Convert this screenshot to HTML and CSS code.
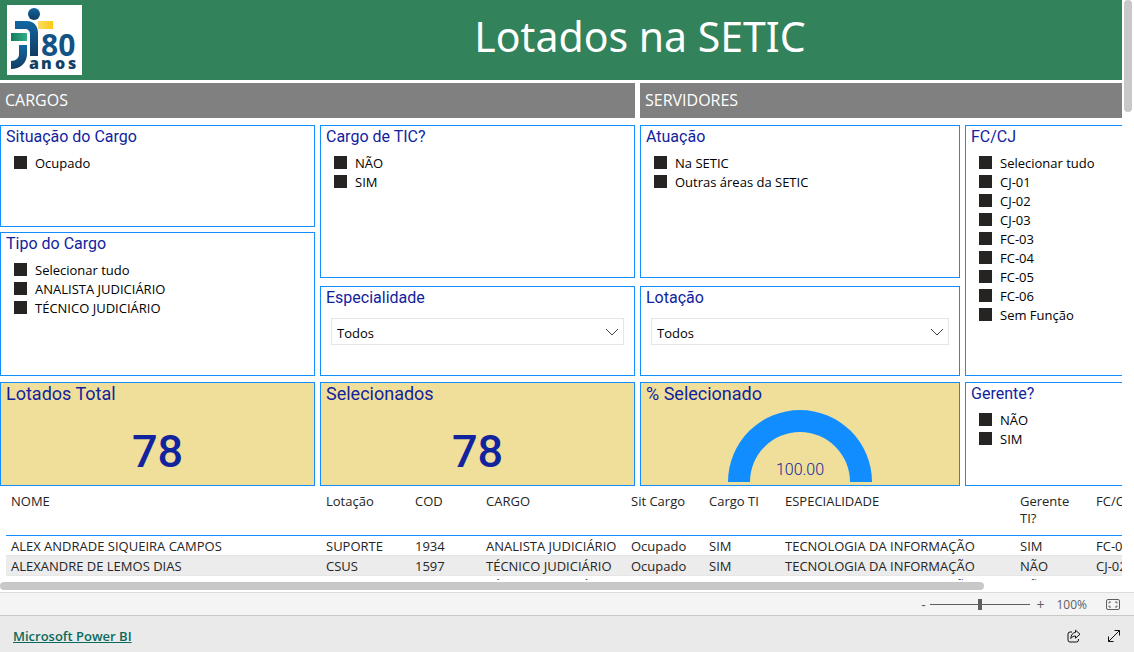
FILE: index.html
```html
<!DOCTYPE html>
<html lang="pt-BR">
<head>
<meta charset="utf-8">
<title>Lotados na SETIC</title>
<link rel="stylesheet" href="styles.css">
</head>
<body>
<div class="viewport">
  <div class="viewport-row">
    <main class="scroll-area">
      <div class="report">
        <header class="banner">
          <svg class="logo" viewBox="0 0 75 70" role="img" aria-label="80 anos">
            <defs>
              <linearGradient id="blue" x1="0" y1="0" x2="0" y2="1"><stop offset="0" stop-color="#1067a3"/><stop offset="1" stop-color="#123c61"/></linearGradient>
              <linearGradient id="green"><stop offset="0" stop-color="#117e5b"/><stop offset="1" stop-color="#35ad8a"/></linearGradient>
              <linearGradient id="yellow"><stop offset="0" stop-color="#fbdc68"/><stop offset="1" stop-color="#fdc910"/></linearGradient>
            </defs>
            <rect width="75" height="70" fill="#fff"/>
            <circle cx="27" cy="9" r="6" fill="url(#blue)"/>
            <path d="M8 16h12c7 0 11 5 11 12v23h-8V29c0-3-2-5-5-5H8z" fill="url(#blue)"/>
            <rect x="31" y="16" width="15" height="8" fill="url(#yellow)"/>
            <rect x="4" y="28" width="16" height="8" fill="url(#green)"/>
            <path d="M12 40h8v9c0 9-7 15-16 15v-8c5 0 8-3 8-7z" fill="url(#blue)"/>
            <text class="logo-number" x="34" y="51">80</text>
            <text class="logo-word" y="64"><tspan x="22">a</tspan><tspan x="34">n</tspan><tspan x="48">o</tspan><tspan x="61">s</tspan></text>
          </svg>
          <h1 class="title">Lotados na SETIC</h1>
        </header>

        <div class="sections">
          <h2 class="section">CARGOS</h2>
          <h2 class="section">SERVIDORES</h2>
        </div>

        <div class="filters">
          <div class="stack stack-first">
            <fieldset class="card short">
              <legend class="card-title">Situação do Cargo</legend>
              <label class="option"><input type="checkbox">Ocupado</label>
            </fieldset>
            <fieldset class="card grow">
              <legend class="card-title">Tipo do Cargo</legend>
              <label class="option"><input type="checkbox">Selecionar tudo</label>
              <label class="option"><input type="checkbox">ANALISTA JUDICIÁRIO</label>
              <label class="option"><input type="checkbox">TÉCNICO JUDICIÁRIO</label>
            </fieldset>
          </div>
          <div class="stack">
            <fieldset class="card grow">
              <legend class="card-title">Cargo de TIC?</legend>
              <label class="option"><input type="checkbox">NÃO</label>
              <label class="option"><input type="checkbox">SIM</label>
            </fieldset>
            <div class="card picker">
              <label class="card-title" for="especialidade">Especialidade</label>
              <div class="select-wrap">
                <select id="especialidade" class="select"><option>Todos</option></select>
                <svg class="chevron" viewBox="0 0 14 8"><path d="M1 1l6 6 6-6"/></svg>
              </div>
            </div>
          </div>
          <div class="stack">
            <fieldset class="card grow">
              <legend class="card-title">Atuação</legend>
              <label class="option"><input type="checkbox">Na SETIC</label>
              <label class="option"><input type="checkbox">Outras áreas da SETIC</label>
            </fieldset>
            <div class="card picker">
              <label class="card-title" for="lotacao">Lotação</label>
              <div class="select-wrap">
                <select id="lotacao" class="select"><option>Todos</option></select>
                <svg class="chevron" viewBox="0 0 14 8"><path d="M1 1l6 6 6-6"/></svg>
              </div>
            </div>
          </div>
          <div class="stack">
            <fieldset class="card grow">
              <legend class="card-title">FC/CJ</legend>
              <label class="option"><input type="checkbox">Selecionar tudo</label>
              <label class="option"><input type="checkbox">CJ-01</label>
              <label class="option"><input type="checkbox">CJ-02</label>
              <label class="option"><input type="checkbox">CJ-03</label>
              <label class="option"><input type="checkbox">FC-03</label>
              <label class="option"><input type="checkbox">FC-04</label>
              <label class="option"><input type="checkbox">FC-05</label>
              <label class="option"><input type="checkbox">FC-06</label>
              <label class="option"><input type="checkbox">Sem Função</label>
            </fieldset>
          </div>
        </div>

        <div class="kpis">
          <section class="card kpi">
            <h3 class="card-title">Lotados Total</h3>
            <p class="kpi-value">78</p>
          </section>
          <section class="card kpi">
            <h3 class="card-title">Selecionados</h3>
            <p class="kpi-value">78</p>
          </section>
          <section class="card kpi">
            <h3 class="card-title">% Selecionado</h3>
            <svg class="gauge" viewBox="0 0 144 72" role="img" aria-label="100,00">
              <path d="M0 72a72 72 0 0 1 144 0h-22a50 50 0 0 0-100 0z" fill="#118dff"/>
              <text class="gauge-value" x="72" y="65" text-anchor="middle">100.00</text>
            </svg>
          </section>
          <fieldset class="card">
            <legend class="card-title">Gerente?</legend>
            <label class="option"><input type="checkbox">NÃO</label>
            <label class="option"><input type="checkbox">SIM</label>
          </fieldset>
        </div>

        <table class="people">
          <colgroup>
            <col class="c-name"><col class="c-unit"><col class="c-code"><col class="c-role"><col class="c-status"><col class="c-ti"><col class="c-spec"><col class="c-manager"><col>
          </colgroup>
          <thead>
            <tr><th>NOME</th><th>Lotação</th><th>COD</th><th>CARGO</th><th>Sit Cargo</th><th>Cargo TI</th><th>ESPECIALIDADE</th><th>Gerente TI?</th><th>FC/CJ</th></tr>
          </thead>
          <tbody>
            <tr><td>ALEX ANDRADE SIQUEIRA CAMPOS</td><td>SUPORTE</td><td>1934</td><td>ANALISTA JUDICIÁRIO</td><td>Ocupado</td><td>SIM</td><td>TECNOLOGIA DA INFORMAÇÃO</td><td>SIM</td><td>FC-04</td></tr>
            <tr><td>ALEXANDRE DE LEMOS DIAS</td><td>CSUS</td><td>1597</td><td>TÉCNICO JUDICIÁRIO</td><td>Ocupado</td><td>SIM</td><td>TECNOLOGIA DA INFORMAÇÃO</td><td>NÃO</td><td>CJ-02</td></tr>
            <tr><td></td><td></td><td></td><td>TÉCNICO JUDICIÁRIO</td><td></td><td></td><td>TECNOLOGIA DA INFORMAÇÃO</td><td>NÃO</td><td></td></tr>
          </tbody>
        </table>
      </div>
    </main>
    <div class="vbar"><div class="vthumb"></div></div>
  </div>
  <div class="hbar"><div class="hthumb"></div></div>
</div>

<div class="zoombar">
  <button class="zoom-btn" aria-label="Reduzir">-</button>
  <input class="zoom-range" type="range" min="0" max="200" value="100" aria-label="Zoom">
  <button class="zoom-btn" aria-label="Ampliar">+</button>
  <span class="zoom-value">100%</span>
  <button class="icon-btn" aria-label="Ajustar à página">
    <svg class="icon-fit" viewBox="0 0 14 11"><rect x=".5" y=".5" width="13" height="10" rx="1.5"/><path d="M3 4.5V3h2M9 3h2v1.500M11 6.500V8H9M5 8H3V6.500"/></svg>
  </button>
</div>

<footer class="footer">
  <a class="brand" href="#">Microsoft Power BI</a>
  <div class="actions">
    <button class="icon-btn" aria-label="Compartilhar">
      <svg class="icon" viewBox="0 0 14 14"><path d="M5 3H3a2 2 0 0 0-2 2v6a2 2 0 0 0 2 2h6.500a2 2 0 0 0 2-2v-1M8.500 1.200l4.500 4-4.500 4V7C6.500 7 5 7.800 3.800 9.500 4 6 5.500 3.700 8.500 3.400z"/></svg>
    </button>
    <button class="icon-btn" aria-label="Tela inteira">
      <svg class="icon" viewBox="0 0 14 14"><path d="M1.500 12.500l11-11M7.500 1.500h5v5M1.500 7.500v5h5"/></svg>
    </button>
  </div>
</footer>
</body>
</html>
```
FILE: styles.css
```css
* {
  box-sizing: border-box;
}

body {
  margin: 0;
  height: 100vh;
  display: flex;
  flex-direction: column;
  overflow: hidden;
  background: #fff;
  color: #252423;
  font: 13px/19px "Open Sans", "Noto Sans", sans-serif;
}

h1, h2, h3, p, fieldset {
  margin: 0;
  font-weight: 400;
}

button {
  padding: 0;
  border: 0;
  background: none;
  color: inherit;
  font: inherit;
}

/* Report viewport and its scrollbars */
.viewport {
  flex: 1;
  min-height: 0;
  display: flex;
  flex-direction: column;
}

.viewport-row {
  flex: 1;
  min-height: 0;
  display: flex;
}

.scroll-area {
  flex: 1;
  min-width: 0;
  overflow: hidden;
}

.vbar {
  width: 12px;
  padding: 0 2px;
}

.vthumb {
  height: 112px;
  border-radius: 4px;
  background: #c8c8c8;
}

.hbar {
  padding: 2px 12px 2px 0;
}

.hthumb {
  width: 87.7%;
  height: 8px;
  border-radius: 4px;
  background: #c8c8c8;
}

.report {
  min-width: 1280px;
}

/* Banner */
.banner {
  display: grid;
  grid-template-columns: 75px 1fr 75px;
  align-items: center;
  height: 80px;
  padding: 0 7px;
  background: #32825b;
}

.logo {
  display: block;
  width: 75px;
  height: 70px;
}

.logo-number {
  font: 700 30px "Open Sans", sans-serif;
  fill: #115385;
}

.logo-word {
  font: 800 16px "Open Sans", sans-serif;
  fill: #123f66;
}

.title {
  padding-bottom: 8px;
  color: #fff;
  font-family: "Noto Sans", "Open Sans", sans-serif;
  font-size: 41px;
  line-height: 56px;
  text-align: center;
}

.sections {
  display: grid;
  grid-template-columns: 635fr 640fr;
  gap: 5px;
  margin: 3px 0 7px;
}

.section {
  padding-left: 5px;
  background: #808080;
  color: #fff;
  font-size: 16px;
  line-height: 35px;
}

/* Cards */
.filters,
.kpis {
  display: grid;
  grid-template-columns: 315fr 315fr 320fr 315fr;
  gap: 5px;
}

.filters {
  min-height: 251px;
}

.stack {
  display: flex;
  flex-direction: column;
  gap: 8px;
}

.stack-first {
  gap: 5px;
}

.card {
  min-width: 0;
  padding: 0 0 0 5px;
  border: 1px solid #118dff;
}

.short {
  height: 102px;
}

.picker {
  height: 90px;
}

.grow {
  flex: 1;
}

.card-title {
  display: block;
  float: left;
  width: 100%;
  padding: 0;
  margin-bottom: 6px;
  color: #12239e;
  font: 400 16px/22px Roboto, sans-serif;
}

.option {
  clear: both;
  display: flex;
  align-items: center;
  gap: 8px;
  padding-left: 8px;
  color: #000;
}

.option input {
  appearance: none;
  width: 13px;
  height: 13px;
  margin: 0 0 2px;
  background: #252423;
}

.select-wrap {
  clear: both;
  position: relative;
  margin: 0 10px 0 5px;
  padding-top: 3px;
}

.select {
  display: block;
  appearance: none;
  width: 100%;
  height: 27px;
  padding: 3px 5px 0;
  border: 1px solid #e6e6e6;
  border-radius: 0;
  background: #fff;
  color: #000;
  font: inherit;
}

.chevron {
  position: absolute;
  right: 5px;
  bottom: 9px;
  width: 14px;
  height: 8px;
  fill: none;
  stroke: #444;
}

.kpis {
  min-height: 104px;
  margin-top: 6px;
}

.kpi {
  padding-right: 5px;
  background: #f0df9a;
}

.kpi .card-title {
  margin-bottom: 5px;
  font-size: 18px;
}

.kpi-value {
  clear: both;
  padding-top: 10px;
  color: #12239e;
  font: 500 45px/64px Roboto, sans-serif;
  text-align: center;
}

.gauge {
  display: block;
  clear: both;
  width: 144px;
  height: 72px;
  margin: 0 auto;
}

.gauge-value {
  font: 300 16px Roboto, sans-serif;
  fill: #12239e;
}

/* Table */
.people {
  width: 1268px;
  margin: 0 6px;
  table-layout: fixed;
  border-collapse: collapse;
  line-height: 17px;
}

.c-name { width: 315px; }
.c-unit { width: 89px; }
.c-code { width: 71px; }
.c-role { width: 145px; }
.c-status { width: 78px; }
.c-ti { width: 76px; }
.c-spec { width: 235px; }
.c-manager { width: 76px; }

.people th {
  height: 49px;
  padding: 7px 5px 0;
  border-bottom: 1px solid #118dff;
  font-weight: 400;
  text-align: left;
  vertical-align: top;
}

.people td {
  height: 20px;
  padding: 2px 5px 0;
  white-space: nowrap;
  border-bottom: 1px solid #e6e6e6;
}

.people tbody tr:first-child td {
  border-top: 1px solid #118dff;
}

.people tbody tr:nth-child(even) {
  background: #ececec;
}

/* Zoom bar */
.zoombar {
  display: flex;
  align-items: center;
  justify-content: flex-end;
  height: 23px;
  padding-right: 14px;
  border-top: 1px solid #dcdcdc;
  background: #f4f4f4;
  color: #605e5c;
  font-size: 12px;
}

.zoom-btn {
  width: 8px;
  font-size: 14px;
}

.zoom-range {
  appearance: none;
  width: 100px;
  height: 12px;
  margin: 0 6px 0 3px;
  background: linear-gradient(#605e5c, #605e5c) center / 100% 1px no-repeat;
}

.zoom-range::-webkit-slider-thumb {
  appearance: none;
  width: 4px;
  height: 11px;
  background: #605e5c;
}

.zoom-value {
  margin: 0 19px 0 12px;
}

.icon-btn {
  display: flex;
}

.icon-fit,
.icon {
  width: 14px;
  height: 14px;
  fill: none;
  stroke: #111;
}

.icon-fit {
  height: 11px;
  stroke: #605e5c;
}

/* Footer */
.footer {
  display: flex;
  align-items: center;
  justify-content: space-between;
  height: 37px;
  padding: 4px 13px 0;
  border-top: 1px solid #c8c8c8;
  background: #eaeaea;
}

.brand {
  color: #0b6a5c;
  font-weight: 600;
}

.actions {
  display: flex;
  gap: 26px;
}
```
